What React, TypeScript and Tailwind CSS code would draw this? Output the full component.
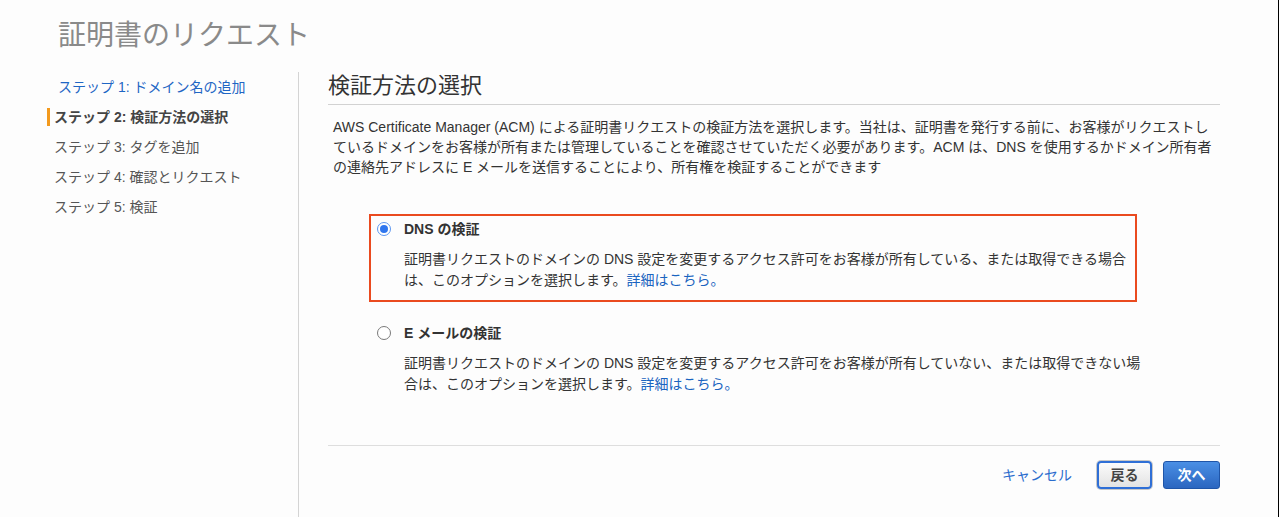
import React from "react";

function Radio({ checked }: { checked: boolean }) {
  return checked ? (
    <span className="flex h-[14px] w-[14px] shrink-0 items-center justify-center rounded-full border border-[#5d97f0] bg-white">
      <span className="h-[8px] w-[8px] rounded-full bg-[#2f76ee]" />
    </span>
  ) : (
    <span className="h-[14px] w-[14px] shrink-0 rounded-full border border-[#7a7a7a] bg-white" />
  );
}

function Option({
  checked,
  label,
  line1,
  line2,
  highlight,
}: {
  checked: boolean;
  label: string;
  line1: string;
  line2: string;
  highlight?: boolean;
}) {
  return (
    <div className="relative w-[790px] pb-[11px] pl-[8px] pt-[5px]">
      <div className="flex items-center gap-[13px]">
        <Radio checked={checked} />
        <span className="text-[14px] font-bold leading-[20px] text-[#333]">{label}</span>
      </div>
      <div className="ml-[27px] mt-[10px] flex w-[745px] flex-col text-[14px] leading-[21px] text-[#333]">
        <span className="whitespace-nowrap">{line1}</span>
        <div className="flex whitespace-nowrap">
          <span>{line2}</span>
          <a className="text-[#1a64c0]">詳細はこちら。</a>
        </div>
      </div>
      {highlight && (
        <div className="pointer-events-none absolute left-0 top-0 h-[88px] w-[768px] border-2 border-[#ea4a1f]" />
      )}
    </div>
  );
}

export default function App() {
  const steps = [
    { t: "ステップ 1: ドメイン名の追加", kind: "link" },
    { t: "ステップ 2: 検証方法の選択", kind: "active" },
    { t: "ステップ 3: タグを追加", kind: "normal" },
    { t: "ステップ 4: 確認とリクエスト", kind: "normal" },
    { t: "ステップ 5: 検証", kind: "normal" },
  ];
  return (
    <div className="flex h-[517px] w-[1279px] flex-col overflow-hidden border-r border-black bg-[#fdfdfd] font-['Liberation_Sans','Noto_Sans_CJK_JP',sans-serif]">
      <h1 className="pl-[58px] pt-[18px] text-[28px] font-normal leading-[36px] text-[#8a8a8a]">
        証明書のリクエスト
      </h1>
      <div className="mt-[18px] flex flex-1">
        <nav className="ml-[47px] w-[252px] border-r border-[#d4d4d4]">
          {steps.map((s) => (
            <div key={s.t} className="flex h-[30px] items-center">
              {s.kind === "active" ? (
                <>
                  <span className="h-[18px] w-[3px] bg-[#f39a1d]" />
                  <span className="ml-[4px] text-[14px] font-bold text-[#444]">{s.t}</span>
                </>
              ) : s.kind === "link" ? (
                <span className="pl-[11px] text-[14px] text-[#1f66c4]">{s.t}</span>
              ) : (
                <span className="pl-[7px] text-[14px] text-[#555]">{s.t}</span>
              )}
            </div>
          ))}
        </nav>
        <main className="ml-[29px] flex w-[892px] flex-col">
          <h2 className="border-b border-[#d2d2d2] pb-[4px] text-[22px] font-normal leading-[28px] text-[#333]">
            検証方法の選択
          </h2>
          <p className="mt-[12px] pl-[5px] text-[14px] leading-[20px] text-[#333]">
            AWS Certificate Manager (ACM)
            による証明書リクエストの検証方法を選択します。当社は、証明書を発行する前に、お客様がリクエストしているドメインをお客様が所有または管理していることを確認させていただく必要があります。ACM
            は、DNS を使用するかドメイン所有者の連絡先アドレスに E
            メールを送信することにより、所有権を検証することができます
          </p>
          <div className="ml-[41px] mt-[37px] flex flex-col gap-[16px]">
            <Option
              checked
              highlight
              label="DNS の検証"
              line1="証明書リクエストのドメインの DNS 設定を変更するアクセス許可をお客様が所有している、または取得できる場合"
              line2="は、このオプションを選択します。"
            />
            <Option
              checked={false}
              label="E メールの検証"
              line1="証明書リクエストのドメインの DNS 設定を変更するアクセス許可をお客様が所有していない、または取得できない場"
              line2="合は、このオプションを選択します。"
            />
          </div>
          <div className="mt-[39px] border-t border-[#dedede]" />
          <div className="mt-[15px] flex items-center justify-end">
            <a className="text-[14px] text-[#2a6ccd]">キャンセル</a>
            <button className="ml-[25px] flex h-[28px] w-[55px] items-center justify-center rounded-[4px] border-2 border-[#2f6fd6] bg-gradient-to-b from-[#fbfbfb] to-[#e3e3e3] text-[14px] font-bold text-[#444] shadow-[0_0_0_1px_#c8c8c8]">
              戻る
            </button>
            <button className="ml-[11px] flex h-[28px] w-[57px] items-center justify-center rounded-[3px] border border-[#1f55a8] bg-gradient-to-b from-[#4a8fe5] to-[#2b66c0] text-[14px] font-bold text-white">
              次へ
            </button>
          </div>
        </main>
      </div>
    </div>
  );
}
